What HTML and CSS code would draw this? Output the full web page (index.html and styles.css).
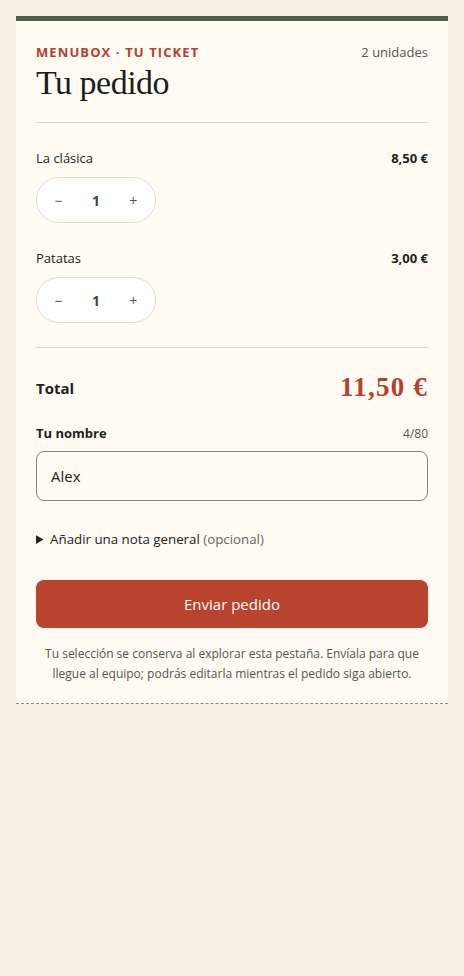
FILE: index.html
```html
<!DOCTYPE html>
<html lang="es">
<head>
  <meta charset="UTF-8" />
  <meta name="viewport" content="width=device-width, initial-scale=1.0" />
  <title>Tu pedido · Menubox</title>
  <link rel="stylesheet" href="styles.css">
</head>
<body>
  <div class="ticket">
    <div class="ticket-head">
      <div class="head-row">
        <span class="eyebrow">MENUBOX · TU TICKET</span>
        <span class="units">2 unidades</span>
      </div>
      <h1>Tu pedido</h1>
    </div>

    <div class="items">
      <div class="item">
        <div class="item-row">
          <span class="item-name">La clásica</span>
          <span class="item-price">8,50 €</span>
        </div>
        <div class="stepper">
          <button type="button">−</button>
          <span class="qty">1</span>
          <button type="button">+</button>
        </div>
      </div>

      <div class="item">
        <div class="item-row">
          <span class="item-name">Patatas</span>
          <span class="item-price">3,00 €</span>
        </div>
        <div class="stepper">
          <button type="button">−</button>
          <span class="qty">1</span>
          <button type="button">+</button>
        </div>
      </div>
    </div>

    <div class="total-row">
      <span class="total-label">Total</span>
      <span class="total-value">11,50 €</span>
    </div>

    <form class="order-form">
      <div class="label-row">
        <label for="name">Tu nombre</label>
        <span class="count">4/80</span>
      </div>
      <input type="text" id="name" value="Alex" maxlength="80" />

      <details class="note">
        <summary>Añadir una nota general <span class="muted">(opcional)</span></summary>
      </details>

      <button type="submit" class="send">Enviar pedido</button>
      <p class="hint">Tu selección se conserva al explorar esta pestaña. Envíala para que llegue al equipo; podrás editarla mientras el pedido siga abierto.</p>
    </form>
  </div>
</body>
</html>
```

FILE: styles.css
```css
body {
  font-family: 'Open Sans', 'Noto Sans', sans-serif;
  background-color: #f8f0e7;
  color: #222;
  margin: 0;
  padding: 16px;
}

.ticket {
  background-color: #fffaf2;
  border-top: 5px solid #4a6049;
  border-bottom: 1px dashed #8d8780;
  padding: 20px 20px 19px;
}

.head-row {
  display: flex;
  justify-content: space-between;
  align-items: baseline;
  line-height: 22px;
}

.eyebrow {
  font-size: 13px;
  font-weight: 700;
  letter-spacing: 1.1px;
  color: #b5412c;
}

.units {
  font-size: 13px;
  color: #555;
}

h1 {
  font-family: 'Liberation Serif', 'DejaVu Serif', serif;
  font-weight: 400;
  font-size: 34px;
  letter-spacing: -0.5px;
  line-height: 40px;
  margin: 0;
  padding-bottom: 19px;
  border-bottom: 1px solid #ddd6cc;
  color: #1d1d1d;
}

.items {
  display: flex;
  flex-direction: column;
  gap: 24px;
  padding: 24px 0 24px;
  border-bottom: 1px solid #ddd6cc;
}

.item-row {
  display: flex;
  justify-content: space-between;
  align-items: center;
  font-size: 13px;
  line-height: 22px;
  margin-bottom: 8px;
}

.item-price {
  font-weight: 700;
}

.stepper {
  display: inline-flex;
  align-items: center;
  width: 120px;
  height: 46px;
  box-sizing: border-box;
  border: 1px solid #e2d9cc;
  border-radius: 23px;
  background-color: #fff;
}

.stepper button {
  flex: 1;
  height: 100%;
  border: none;
  background: none;
  font-family: inherit;
  font-size: 14px;
  color: #555;
  cursor: pointer;
}

.qty {
  flex: 1;
  text-align: center;
  font-size: 14px;
  font-weight: 700;
  color: #444;
}

.total-row {
  display: flex;
  justify-content: space-between;
  align-items: center;
  padding: 24px 0 21px;
}

.total-label {
  font-size: 15px;
  font-weight: 700;
}

.total-value {
  font-family: 'Liberation Serif', 'DejaVu Serif', serif;
  font-size: 27px;
  font-weight: 700;
  letter-spacing: 1.2px;
  color: #b5412c;
}

.label-row {
  display: flex;
  justify-content: space-between;
  align-items: baseline;
  margin-bottom: 9px;
}

label {
  font-size: 13px;
  font-weight: 700;
}

.count {
  font-size: 12px;
  color: #555;
}

input {
  display: block;
  width: 100%;
  height: 50px;
  padding: 0 14px;
  box-sizing: border-box;
  border: 1px solid #8a8280;
  border-radius: 8px;
  background-color: #fffaf2;
  font-family: inherit;
  font-size: 15px;
  color: #222;
}

.note {
  margin: 29px 0 32px;
  font-size: 13.3px;
}

.note summary {
  cursor: pointer;
}

.muted {
  color: #666;
}

.send {
  display: block;
  width: 100%;
  height: 48px;
  border: none;
  border-radius: 8px;
  background-color: #b8432e;
  color: #fff;
  font-family: inherit;
  font-size: 15px;
  cursor: pointer;
}

.hint {
  margin: 16px 0 0;
  font-size: 12px;
  line-height: 20px;
  color: #555;
  text-align: center;
}
```
